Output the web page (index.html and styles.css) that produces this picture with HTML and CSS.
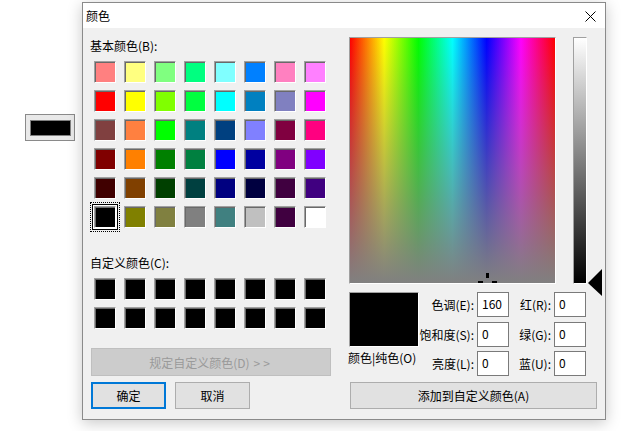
FILE: index.html
```html
<!DOCTYPE html>
<html lang="zh-CN">
<head>
<meta charset="utf-8">
<title>颜色</title>
<link rel="stylesheet" href="styles.css">
</head>
<body>
<div class="page">
  <div class="color-btn"><span class="color-btn-chip"></span></div>
</div>

<div class="dialog">
  <div class="titlebar">
    <span class="title">颜色</span>
    <svg class="close" width="11" height="11" viewBox="0 0 11 11"><path d="M0.5 0.5 L10.5 10.5 M10.5 0.5 L0.5 10.5" stroke="#000" stroke-width="1" fill="none"/></svg>
  </div>
  <div class="content">
    <div class="left">
      <div class="label">基本颜色(B):</div>
      <div class="swatches basic">
        <span class="sw" style="background:#ff8080"></span><span class="sw" style="background:#ffff80"></span><span class="sw" style="background:#80ff80"></span><span class="sw" style="background:#00ff80"></span><span class="sw" style="background:#80ffff"></span><span class="sw" style="background:#0080ff"></span><span class="sw" style="background:#ff80c0"></span><span class="sw" style="background:#ff80ff"></span>
        <span class="sw" style="background:#ff0000"></span><span class="sw" style="background:#ffff00"></span><span class="sw" style="background:#80ff00"></span><span class="sw" style="background:#00ff40"></span><span class="sw" style="background:#00ffff"></span><span class="sw" style="background:#0080c0"></span><span class="sw" style="background:#8080c0"></span><span class="sw" style="background:#ff00ff"></span>
        <span class="sw" style="background:#804040"></span><span class="sw" style="background:#ff8040"></span><span class="sw" style="background:#00ff00"></span><span class="sw" style="background:#008080"></span><span class="sw" style="background:#004080"></span><span class="sw" style="background:#8080ff"></span><span class="sw" style="background:#800040"></span><span class="sw" style="background:#ff0080"></span>
        <span class="sw" style="background:#800000"></span><span class="sw" style="background:#ff8000"></span><span class="sw" style="background:#008000"></span><span class="sw" style="background:#008040"></span><span class="sw" style="background:#0000ff"></span><span class="sw" style="background:#0000a0"></span><span class="sw" style="background:#800080"></span><span class="sw" style="background:#8000ff"></span>
        <span class="sw" style="background:#400000"></span><span class="sw" style="background:#804000"></span><span class="sw" style="background:#004000"></span><span class="sw" style="background:#004040"></span><span class="sw" style="background:#000080"></span><span class="sw" style="background:#000040"></span><span class="sw" style="background:#400040"></span><span class="sw" style="background:#400080"></span>
        <span class="sw sel" style="background:#000000"></span><span class="sw" style="background:#808000"></span><span class="sw" style="background:#808040"></span><span class="sw" style="background:#808080"></span><span class="sw" style="background:#408080"></span><span class="sw" style="background:#c0c0c0"></span><span class="sw" style="background:#400040"></span><span class="sw" style="background:#ffffff"></span>
      </div>
      <div class="label custom-label">自定义颜色(C):</div>
      <div class="swatches custom">
        <span class="sw blk"></span><span class="sw blk"></span><span class="sw blk"></span><span class="sw blk"></span><span class="sw blk"></span><span class="sw blk"></span><span class="sw blk"></span><span class="sw blk"></span>
        <span class="sw blk"></span><span class="sw blk"></span><span class="sw blk"></span><span class="sw blk"></span><span class="sw blk"></span><span class="sw blk"></span><span class="sw blk"></span><span class="sw blk"></span>
      </div>
      <div class="btn define">规定自定义颜色(D) <span class="arrows">&gt;&gt;</span></div>
      <div class="btn-row">
        <div class="btn ok">确定</div>
        <div class="btn cancel">取消</div>
      </div>
    </div>
    <div class="right">
      <div class="pickers">
        <div class="spectrum">
          <span class="cross cv"></span>
          <span class="cross chl"></span>
          <span class="cross chr"></span>
        </div>
        <div class="lumwrap">
          <div class="lum"></div>
          <svg class="arrow" width="15" height="28" viewBox="0 0 15 28"><polygon points="0,14 14,0 14,27" fill="#000"/></svg>
        </div>
      </div>
      <div class="fields">
        <div class="preview"></div>
        <div class="flabel r1 c2">色调(E):</div>
        <div class="field r1 c3">160</div>
        <div class="flabel r1 c4">红(R):</div>
        <div class="field r1 c5">0</div>
        <div class="flabel r2 c2">饱和度(S):</div>
        <div class="field r2 c3">0</div>
        <div class="flabel r2 c4">绿(G):</div>
        <div class="field r2 c5">0</div>
        <div class="solid r3">颜色|纯色(O)</div>
        <div class="flabel r3 c2">亮度(L):</div>
        <div class="field r3 c3">0</div>
        <div class="flabel r3 c4">蓝(U):</div>
        <div class="field r3 c5">0</div>
      </div>
      <div class="btn add">添加到自定义颜色(A)</div>
    </div>
  </div>
</div>
</body>
</html>
```

FILE: styles.css
```css
html, body {
  margin: 0;
  padding: 0;
  background: #ffffff;
  font-family: "Noto Sans CJK SC", "Noto Sans", sans-serif;
  font-size: 12px;
  color: #000;
}

.page {
  padding: 114px 0 0 25px;
}

.color-btn {
  width: 50px;
  height: 27px;
  box-sizing: border-box;
  border: 1px solid #8a8a8a;
  background: #e9e9e9;
  display: flex;
  align-items: center;
  justify-content: center;
}

.color-btn-chip {
  width: 41px;
  height: 16px;
  box-sizing: border-box;
  border: 1px solid #808080;
  background: #000;
}

.dialog {
  position: absolute;
  left: 82px;
  top: 2px;
  width: 524px;
  height: 418px;
  box-sizing: border-box;
  border: 1px solid #8a8a8a;
  background: #f0f0f0;
  box-shadow: 0 3px 14px rgba(0, 0, 0, 0.22);
}

.titlebar {
  height: 25px;
  background: #fff;
  display: flex;
  align-items: center;
  padding-left: 3px;
}

.title {
  line-height: 16px;
  margin-top: 1px;
}

.close {
  margin-left: auto;
  margin-right: 9px;
  margin-top: 1px;
}

.content {
  display: flex;
  gap: 18px;
  padding: 9px 0 0 7px;
}

.left {
  width: 241px;
}

.label {
  height: 18px;
  line-height: 18px;
  white-space: nowrap;
}

.swatches {
  display: grid;
  grid-template-columns: repeat(8, 22px);
  grid-auto-rows: 22px;
  column-gap: 8px;
  row-gap: 7px;
  margin: 6px 0 0 4px;
}

.sw {
  display: block;
  width: 22px;
  height: 22px;
  box-sizing: border-box;
  border-style: solid;
  border-width: 1px;
  border-color: #a0a0a0 #ffffff #ffffff #a0a0a0;
  box-shadow: inset 1px 1px 0 #696969;
}

.sw.blk {
  background: #000;
}

.sw.sel {
  box-shadow: inset 1px 1px 0 #696969, 0 0 0 1px #ffffff, 0 0 0 2px #000000;
  outline: 1px dotted #000;
  outline-offset: 3px;
}

.custom-label {
  margin-top: 26px;
}

.btn {
  box-sizing: border-box;
  display: flex;
  align-items: center;
  justify-content: center;
  background: #e1e1e1;
  border: 1px solid #adadad;
  white-space: nowrap;
}

.define {
  margin: 19px 0 0 1px;
  width: 240px;
  height: 28px;
  background: #cccccc;
  border-color: #bfbfbf;
  color: #9a9a9a;
}

.arrows {
  margin-left: 4px;
  letter-spacing: 3px;
}

.btn-row {
  display: flex;
  gap: 9px;
  margin: 6px 0 0 1px;
}

.ok, .cancel {
  width: 75px;
  height: 27px;
}

.ok {
  border: 2px solid #0078d7;
}

.right {
  width: 254px;
}

.pickers {
  display: flex;
  gap: 17px;
}

.spectrum {
  position: relative;
  overflow: hidden;
  width: 207px;
  height: 247px;
  box-sizing: border-box;
  border-style: solid;
  border-width: 1px;
  border-color: #a0a0a0 #ffffff #ffffff #a0a0a0;
  background:
    linear-gradient(to bottom, rgba(128, 128, 128, 0), #808080),
    linear-gradient(to right, #ff0000, #ffff00 16.67%, #00ff00 33.33%, #00ffff 50%, #0000ff 66.67%, #ff00ff 83.33%, #ff0000);
}

.cross {
  position: absolute;
  background: #000;
}

.cv {
  left: 136px;
  top: 235px;
  width: 3px;
  height: 5px;
}

.chl {
  left: 128px;
  top: 243px;
  width: 5px;
  height: 3px;
}

.chr {
  left: 142px;
  top: 243px;
  width: 5px;
  height: 3px;
}

.lumwrap {
  position: relative;
}

.lum {
  width: 14px;
  height: 247px;
  box-sizing: border-box;
  border-style: solid;
  border-width: 1px;
  border-color: #a0a0a0 #ffffff #ffffff #a0a0a0;
  background: linear-gradient(to bottom, #ffffff, #000000);
}

.arrow {
  position: absolute;
  left: 15px;
  top: 232px;
}

.fields {
  display: grid;
  grid-template-columns: 70px 52px 32px 39px 32px;
  grid-template-rows: 25px 25px 25px;
  column-gap: 3px;
  row-gap: 4.5px;
  margin-top: 8px;
}

.preview {
  grid-column: 1;
  grid-row: 1 / span 2;
  box-sizing: border-box;
  border-style: solid;
  border-width: 1px;
  border-color: #a0a0a0 #ffffff #ffffff #a0a0a0;
  background: #000;
}

.r1 { grid-row: 1; }
.r2 { grid-row: 2; }
.r3 { grid-row: 3; }
.c2 { grid-column: 2; }
.c3 { grid-column: 3; }
.c4 { grid-column: 4; }
.c5 { grid-column: 5; }

.flabel {
  display: flex;
  align-items: center;
  justify-content: flex-end;
  white-space: nowrap;
}

.field {
  box-sizing: border-box;
  border: 1px solid #7a7a7a;
  background: #fff;
  padding-left: 4px;
  line-height: 22px;
}

.solid {
  grid-column: 1;
  margin-left: -1px;
  line-height: 14px;
  white-space: nowrap;
}

.add {
  margin: 6px 0 0 1px;
  width: 247px;
  height: 27px;
}
```
